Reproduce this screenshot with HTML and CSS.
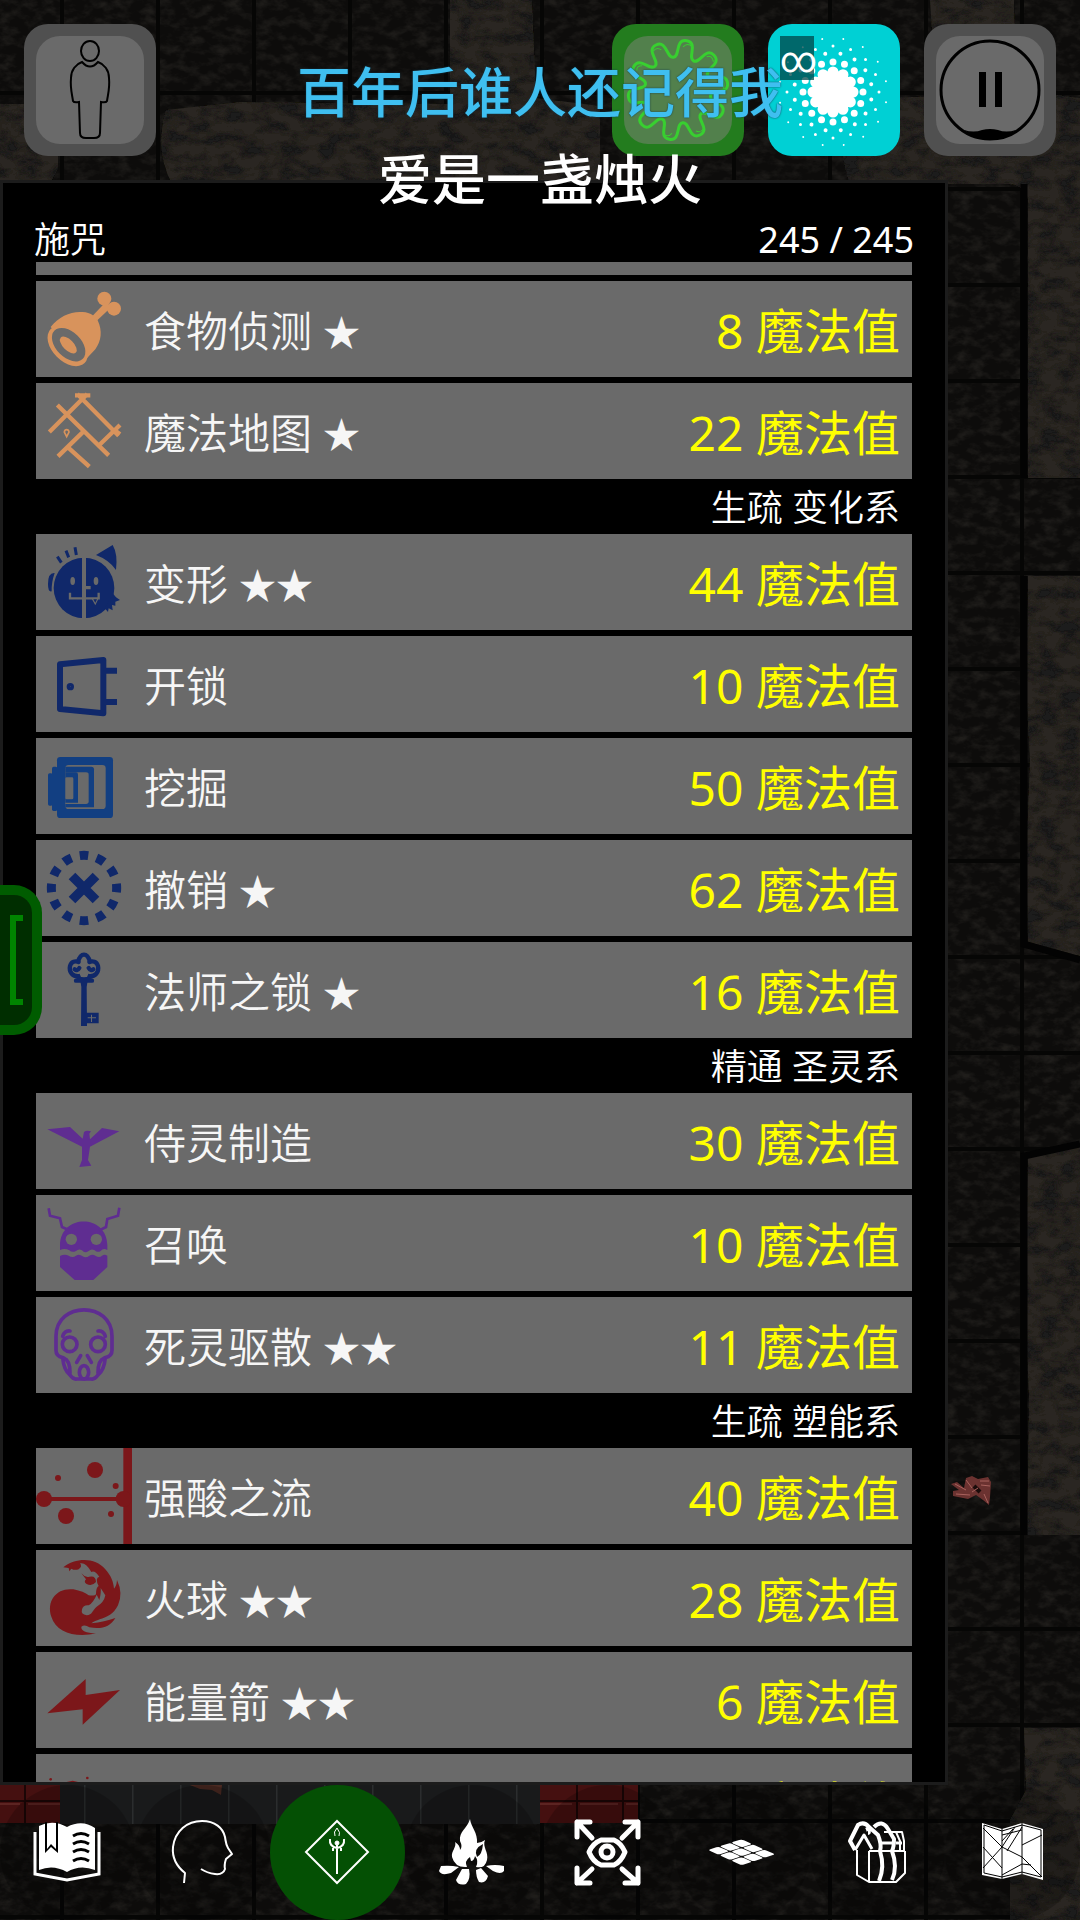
FILE: index.html
```html
<!DOCTYPE html>
<html lang="zh-CN">
<head>
<meta charset="utf-8">
<meta name="viewport" content="width=device-width, initial-scale=1">
<title>施咒</title>
<link rel="stylesheet" href="styles.css">
</head>
<body>
<div class="game">
  <svg class="dungeon" viewBox="0 0 1080 1920" preserveAspectRatio="xMaxYMax slice" aria-hidden="true">
    <defs>
      <filter id="rough" x="0" y="0" width="100%" height="100%">
        <feTurbulence type="fractalNoise" baseFrequency="0.07 0.11" numOctaves="4" seed="7"/>
        <feColorMatrix values="0 0 0 0 0.2  0 0 0 0 0.18  0 0 0 0 0.15  2.4 0 0 0 -1"/>
      </filter>
      <filter id="stone" x="0" y="0" width="100%" height="100%">
        <feTurbulence type="fractalNoise" baseFrequency="0.05 0.09" numOctaves="4" seed="3"/>
        <feColorMatrix values="0 0 0 0 0.01  0 0 0 0 0.01  0 0 0 0 0.01  3 0 0 0 -1.2" result="grain"/>
        <feComposite in="grain" in2="SourceAlpha" operator="in" result="cut"/>
        <feMerge><feMergeNode in="SourceGraphic"/><feMergeNode in="cut"/></feMerge>
      </filter>
      <pattern id="joints" x="60" y="0" width="96" height="96" patternUnits="userSpaceOnUse">
        <path d="M2 0V96M0 93H96" fill="none" stroke="#060605" stroke-width="4"/>
      </pattern>
      <pattern id="slab" x="36" y="1782" width="48" height="42" patternUnits="userSpaceOnUse">
        <rect width="48" height="42" fill="#191a1b"/>
        <path d="M0 0V42" stroke="#2b2d2e" stroke-width="3"/>
      </pattern>
      <pattern id="brick" x="24" y="1800" width="46" height="42" patternUnits="userSpaceOnUse">
        <rect width="46" height="42" fill="#451010"/>
        <path d="M0 0H46M0 0V42" stroke="#1b0606" stroke-width="4"/>
        <path d="M4 4H42" stroke="#5c2422" stroke-width="2"/>
      </pattern>
    </defs>
    <rect width="1080" height="1920" fill="#0d0c0b"/>
    <rect width="1080" height="1920" filter="url(#rough)" opacity=".16"/>
    <rect width="1080" height="1920" fill="url(#joints)"/>
    <g fill="#2a2721" filter="url(#stone)">
      <path d="M450 0H532L536 98 600 106V184H172Q154 150 166 110L240 102 450 104Z"/>
      <path d="M0 104H50L58 120V168L50 184H0Z"/>
      <path d="M930 0H1014L1016 90 1080 98V478H1028V200Q1024 184 1008 184H850Q838 150 840 100L936 96Z"/>
      <path d="M1028 576H1080V956L1028 942 1026 860 1030 760 1026 690Z"/>
      <path d="M1028 1158 1080 1146V1535H1027L1029 1400 1025 1300Z"/>
      <path d="M1024 1728H1080V1920H1010V1820L1026 1790Z"/>
    </g>
    <path d="M1024 576V944L1080 960M1024 1535V1156L1080 1144M1024 184V478" fill="none" stroke="#030303" stroke-width="7"/>
    <rect x="60" y="1782" width="480" height="42" fill="url(#slab)"/>
    <path d="M0 1782H60V1823H0ZM540 1782H638V1823H540Z" fill="url(#brick)"/>
    <path d="M190 1785 222 1785 221 1795 212 1790 200 1789Z" fill="#4b2a22"/>
    <path d="M951 1484 957 1482 964 1488 966 1478 972 1476 978 1479 988 1477 991 1482 990 1497 989 1505 983 1500 976 1495 968 1499 953 1496 953 1491 959 1490Z" fill="#6b3230"/>
    <path d="M974 1486 980 1492" stroke="#1a0b0a" stroke-width="4"/>
    <path d="M955 1484 966 1490M966 1480 972 1488M956 1494 970 1495M980 1481 989 1481M981 1485 990 1486M972 1492 978 1488M984 1494 988 1503" fill="none" stroke="#a9625d" stroke-width="1"/>
  </svg>

  <header class="toolbar">
    <button class="tool" aria-label="角色">
      <svg viewBox="0 0 132 132" fill="none" stroke="#000" stroke-width="2">
        <ellipse cx="66" cy="27" rx="9" ry="10"/>
        <path d="M58 38C52 40 47 46 47 54C46 64 48 70 49 77Q50 79 55 78L56 109Q56 114 62 114H70Q76 114 76 109L77 78Q82 79 83 77C84 70 86 64 85 54C85 46 80 40 74 38Q66 47 58 38Z"/>
      </svg>
    </button>
    <span class="toolbar-space"></span>
    <button class="tool tool-slime" aria-label="黏液">
      <svg viewBox="0 0 132 132" fill="none" stroke="#38cf30" stroke-width="3" stroke-linejoin="round">
        <g transform="translate(66 66) rotate(-8)">
          <path d="M50 0C50 12 33.6 3.5 31.4 10.2S47.5 19.7 40.5 29.4S25.1 22.6 19.4 26.7S26.9 43.9 15.5 47.6S7 33 0 33S-4.1 51.3 -15.5 47.6S-13.7 30.8 -19.4 26.7S-33.5 39.1 -40.5 29.4S-29.2 16.9 -31.4 10.2S-50 12 -50 0S-33.6 -3.5 -31.4 -10.2S-47.5 -19.7 -40.5 -29.4S-25.1 -22.6 -19.4 -26.7S-26.9 -43.9 -15.5 -47.6S-7 -33 0 -33S4.1 -51.3 15.5 -47.6S13.7 -30.8 19.4 -26.7S33.5 -39.1 40.5 -29.4S29.2 -16.9 31.4 -10.2S50 -12 50 0Z"/>
          <path stroke-width="1" d="M-19 -42Q-15 -46 -11 -42M11 -42Q16 -46 20 -41M33 -29Q39 -30 39 -23M-38 -25Q-38 -30 -32 -29M-46 4Q-48 -1 -44 -4M12 43Q16 46 20 42M-20 42Q-16 46 -12 42M45 5Q48 0 45 -5"/>
        </g>
      </svg>
    </button>
    <button class="tool tool-light" aria-label="光亮 ∞">
      <svg viewBox="0 0 132 132" fill="none" stroke="#fff" stroke-linecap="round">
        <circle cx="65" cy="68" r="21" fill="#fff" stroke="none"/>
        <circle cx="65" cy="68" r="20" stroke-width="11" pathLength="12" stroke-dasharray="0 1"/>
        <circle cx="65" cy="68" r="30" stroke-width="7" pathLength="16" stroke-dasharray="0 1"/>
        <circle cx="65" cy="68" r="39" stroke-width="4" pathLength="16" stroke-dasharray="0 1" transform="rotate(11 65 68)"/>
        <circle cx="65" cy="68" r="46" stroke-width="3" pathLength="16" stroke-dasharray="0 1"/>
        <circle cx="65" cy="68" r="54" stroke-width="2" pathLength="16" stroke-dasharray="0 1" transform="rotate(11 65 68)"/>
      </svg>
      <span class="tool-count">∞</span>
    </button>
    <button class="tool" aria-label="暂停">
      <svg viewBox="0 0 132 132">
        <circle cx="66" cy="66" r="49" fill="none" stroke="#000" stroke-width="3"/>
        <path d="M55 48H62V83H55ZM71 48H78V83H71Z"/>
        <path d="M40 106Q50 109 58 106Q66 104 74 106Q82 109 92 106Q80 116 66 116Q52 116 40 106Z"/>
      </svg>
    </button>
  </header>

  <main class="panel">
    <div class="panel-head">
      <h1>施咒</h1>
      <output class="mana">245 / 245</output>
    </div>
    <div class="spells">
      <div class="spell-tail"></div>
      <button class="spell">
        <svg class="c-divine" viewBox="0 0 288 288">
          <path d="M44 138C70 105 105 90 140 93C165 95 176 105 185 118C200 150 196 180 178 205L140 245Z"/>
          <ellipse cx="95" cy="195" rx="72" ry="46" transform="rotate(45 95 195)"/>
          <ellipse class="cut" cx="98" cy="191" rx="60" ry="38" transform="rotate(45 98 191)"/>
          <ellipse cx="97" cy="192" rx="32" ry="16" transform="rotate(45 97 192)"/>
          <circle cx="205" cy="53" r="21"/><circle cx="234" cy="83" r="21"/>
          <path d="M170 104 210 62 226 78 184 118Z"/>
        </svg>
        <span class="name">食物侦测 <i>★</i></span><span class="cost">8 魔法值</span>
      </button>
      <button class="spell">
        <svg class="c-divine line" viewBox="0 0 288 288">
          <path d="M64 66 218 217M40 147 154 33M124 33 248 158M252 126 190 186M142 146 66 220M96 193 160 251M117 37H163M252 154 236 142"/>
          <path class="thin" d="M92 161 85 147Q86 140 92 140Q98 140 99 147Z"/>
        </svg>
        <span class="name">魔法地图 <i>★</i></span><span class="cost">22 魔法值</span>
      </button>

      <h2>生疏 变化系</h2>
      <button class="spell">
        <svg class="c-alter" viewBox="0 0 288 288">
          <circle cx="144" cy="162" r="91"/>
          <path d="M56 117Q46 145 47 172Q36 175 36 150Q36 115 56 117ZM180 63 230 33Q246 60 240 108Q220 78 180 63ZM232 180 240 190 252 198 238 203 238 215 228 213 230 229 218 223 216 234 206 222Z"/>
          <path d="M64 68 76 86M90 50 98 70M117 40 121 63" stroke="#10286a" stroke-width="9"/>
          <path class="cut" d="M138 66H150V256H138ZM150 156H164V166H150ZM166 193 178 214 188 193Z"/>
          <ellipse class="cut" cx="110" cy="141" rx="7" ry="12"/><ellipse class="cut" cx="180" cy="141" rx="7" ry="12"/>
          <path d="M102 176V193H188V176" fill="none" stroke="#6a6a6a" stroke-width="7"/>
          <path d="M172 196 178 206 183 196Z"/>
        </svg>
        <span class="name">变形 <i>★★</i></span><span class="cost">44 魔法值</span>
      </button>
      <button class="spell">
        <svg class="c-alter line" viewBox="0 0 288 288" stroke-width="18" stroke-linejoin="round">
          <path d="M72 85 202 72V232L72 219ZM208 104H243M208 198H243"/>
          <circle cx="103" cy="152" r="5" stroke-width="12"/>
        </svg>
        <span class="name">开锁</span><span class="cost">10 魔法值</span>
      </button>
      <button class="spell">
        <svg class="c-dig" viewBox="0 0 288 288">
          <rect x="36" y="106" width="14" height="97" rx="5"/><rect x="48" y="86" width="16" height="133" rx="5"/>
          <rect x="63" y="57" width="168" height="183" rx="10"/>
          <rect class="cut" x="88" y="81" width="121" height="132" rx="10"/>
          <path d="M88 86H166Q174 86 174 94V208H88Z"/>
          <path class="cut" d="M88 103H150Q158 103 158 110V190Q158 198 150 198H88Z"/>
          <path d="M88 103H120Q126 103 126 110V194H88Z"/>
          <rect class="cut" x="88" y="118" width="24" height="66" rx="4"/>
        </svg>
        <span class="name">挖掘</span><span class="cost">50 魔法值</span>
      </button>
      <button class="spell">
        <svg class="c-alter line" viewBox="0 0 288 288">
          <path stroke-width="28" d="M108 108 180 180M180 108 108 180"/>
          <circle cx="144" cy="144" r="98" stroke-width="27" pathLength="360" stroke-dasharray="15 15" stroke-dashoffset="7.5"/>
        </svg>
        <span class="name">撤销 <i>★</i></span><span class="cost">62 魔法值</span>
      </button>
      <button class="spell">
        <svg class="c-alter" viewBox="0 0 288 288">
          <path d="M132 110H156L152 135 153 252H135L136 135ZM150 212H188V244H150Z"/>
          <path fill="none" stroke="#10286a" stroke-width="13" stroke-linecap="round" d="M144 112C128 112 124 108 132 102C110 106 98 90 102 72C106 58 118 56 128 60M144 112C160 112 164 108 156 102C178 106 190 90 186 72C182 58 170 56 160 60M126 60Q132 38 144 38Q156 38 162 60M130 78Q124 88 116 82M158 78Q164 88 172 82M120 116H168"/>
          <path class="cut" d="M155 226H180V229H155ZM165 218H168V240H165Z"/>
        </svg>
        <span class="name">法师之锁 <i>★</i></span><span class="cost">16 魔法值</span>
      </button>

      <h2>精通 圣灵系</h2>
      <button class="spell">
        <svg class="c-spirit" viewBox="0 0 288 288">
          <path d="M34 109 102 102 140 137 144 117Q152 110 165 115L160 122 162 139 198 105 250 115 162 161 156 201 166 218 130 222 138 201 138 161Z"/>
        </svg>
        <span class="name">侍灵制造</span><span class="cost">30 魔法值</span>
      </button>
      <button class="spell">
        <svg class="c-spirit" viewBox="0 0 288 288">
          <path d="M72 165V150C74 56 212 56 214 150V165Q202 158 194 168Q184 174 176 166Q166 160 158 168Q146 176 138 166Q128 160 120 168Q108 174 100 166Q86 158 72 165ZM72 183Q86 176 98 182Q110 190 120 182Q130 176 140 184Q150 190 160 182Q170 176 178 182Q190 190 198 182Q206 176 214 182V216L172 255H116L72 216Z"/>
          <path fill="none" stroke="#5f2d91" stroke-width="8" d="M38 40 42 62 72 70 78 96 100 106M250 38 246 62 214 72 210 96 190 106"/>
          <circle class="cut" cx="106" cy="133" r="17"/><circle class="cut" cx="181" cy="133" r="17"/>
        </svg>
        <span class="name">召唤</span><span class="cost">10 魔法值</span>
      </button>
      <button class="spell">
        <svg class="c-spirit line" viewBox="0 0 288 288" stroke-width="11" stroke-linecap="round">
          <path d="M60 118C60 12 228 12 228 118V160Q228 178 208 182C206 205 202 222 186 234Q176 248 166 246H122Q112 248 102 234C86 222 82 205 80 182Q60 178 60 160Z"/>
          <circle cx="101" cy="142" r="22"/><circle cx="186" cy="142" r="22"/>
          <path d="M80 118Q86 100 102 102M208 118Q202 100 186 102M134 176 122 196M154 176 166 196M84 184Q102 190 102 228M204 184Q186 190 186 228"/>
          <ellipse cx="144" cy="226" rx="14" ry="20"/>
        </svg>
        <span class="name">死灵驱散 <i>★★</i></span><span class="cost">11 魔法值</span>
      </button>

      <h2>生疏 塑能系</h2>
      <button class="spell">
        <svg class="c-evoke" viewBox="0 0 288 288">
          <path d="M262 0H288V288H262ZM24 147H262V159H24Z"/>
          <circle cx="24" cy="153" r="24"/><circle cx="263" cy="153" r="24"/><circle cx="177" cy="66" r="24"/><circle cx="90" cy="204" r="24"/>
          <circle cx="66" cy="90" r="9"/><circle cx="239" cy="114" r="9"/><circle cx="225" cy="198" r="9"/>
        </svg>
        <span class="name">强酸之流</span><span class="cost">40 魔法值</span>
      </button>
      <button class="spell">
        <svg class="c-evoke" viewBox="0 0 288 288">
          <path d="M82 52C120 22 178 22 208 58C226 78 232 96 234 116Q242 108 243 90Q262 130 246 166Q236 186 222 194C200 208 180 208 166 220Q206 216 238 204C222 232 196 238 160 232Q146 222 136 230Q134 248 180 250C120 264 60 248 46 200C30 150 64 112 112 118Q144 124 158 136Q178 138 180 132Q180 112 188 108Q176 84 190 80Q176 60 166 66Q150 36 132 40Q140 50 128 58Q116 62 106 56L100 64 98 54Z"/>
          <path d="M136 70Q148 84 160 80Q180 76 180 96Q168 110 152 102Q142 96 150 88Z"/>
          <path class="cut" d="M182 134 190 150Q196 128 194 114L208 136Q204 158 182 170C168 182 170 194 152 196Q134 194 138 178Q142 164 158 166Q172 158 182 134Z"/>
        </svg>
        <span class="name">火球 <i>★★</i></span><span class="cost">28 魔法值</span>
      </button>
      <button class="spell">
        <svg class="c-evoke" viewBox="0 0 288 288"><path d="M34 184 149 81V129L252 114 140 218V172Z"/></svg>
        <span class="name">能量箭 <i>★★</i></span><span class="cost">6 魔法值</span>
      </button>
      <button class="spell">
        <svg class="c-evoke" viewBox="0 0 288 288"><circle cx="44" cy="76" r="4"/><circle cx="154" cy="72" r="4"/><path d="M92 84 110 80 126 84 130 100H90Z"/></svg>
        <span class="cost">魔法值</span>
      </button>
    </div>
  </main>

  <nav class="dock" aria-label="菜单">
    <button class="dock-item" aria-label="日志">
      <svg viewBox="0 0 135 135">
        <path d="M35 47V89L67 95 99 89V47" fill="none" stroke="#fff" stroke-width="3"/>
        <path fill="#fff" d="M39 41Q53 34 67 42Q82 34 95 43V85Q80 79 67 87Q53 79 39 85Z"/>
        <path d="M45 37H47V64L51 59 56 64V37H58V68L51 62 45 68Z"/>
        <path d="M73 51Q81 46 89 51M73 59Q81 54 89 59M73 67Q81 62 89 67M73 76Q81 71 89 76" fill="none" stroke="#000" stroke-width="3"/>
      </svg>
    </button>
    <button class="dock-item" aria-label="心智">
      <svg viewBox="0 0 135 135" fill="none" stroke="#fff" stroke-width="2" stroke-linejoin="round">
        <path d="M49 98 50 88C40 80 37 72 38 62C40 46 52 36 67 36C80 36 88 43 90 52C91 58 91 60 93 63L97 69 91 74Q89 80 90 84Q88 90 80 89Q72 88 66 84"/>
      </svg>
    </button>
    <button class="dock-item is-active" aria-label="施咒" aria-current="page">
      <svg viewBox="0 0 135 135" fill="none" stroke="#fff">
        <path stroke-width="2" d="M67 36 98 67 67 98 36 67Z"/>
        <path stroke-width="2" d="M67 60V89M60 54Q59 62 67 63Q75 62 74 54M63 63V66M71 63V66"/>
        <path d="M65 51Q63 47 67 43Q71 48 69 51"/>
        <circle cx="67" cy="58" r="2" fill="#fff"/>
      </svg>
    </button>
    <button class="dock-item" aria-label="休息">
      <svg viewBox="0 0 135 135" fill="#fff">
        <path d="M65 34C66 42 73 48 72 58Q76 58 80 55C77 62 84 67 82 75Q80 84 71 82Q74 76 70 71Q69 76 66 76L65 72Q59 76 62 82Q50 83 47 72C46 66 52 62 50 57Q55 60 55 65Q58 62 55 56C54 46 62 44 65 34Z"/>
        <path class="dark" d="M78 59Q68 64 72 72Q77 70 78 59Z"/>
        <path d="M36 81Q45 80 54 82L46 88Q36 91 34 86ZM99 81Q90 79 81 81L88 86Q96 90 99 86ZM57 84 64 84Q66 94 61 99Q53 101 51 95ZM71 85 76 83 83 91Q81 99 74 97Q71 92 71 85Z"/>
      </svg>
    </button>
    <button class="dock-item" aria-label="观察">
      <svg viewBox="0 0 135 135" fill="none" stroke="#fff" stroke-width="5" stroke-linejoin="round" stroke-linecap="round">
        <path d="M37 52V37H50M37 37 52 53M85 37H98V52M98 37 82 53M37 83V98H50M37 98 52 84M85 98H98V83M98 98 82 84"/>
        <path d="M49 67Q53 58 61 55H74Q81 58 85 67Q81 77 74 80H61Q53 77 49 67Z"/>
        <circle cx="67" cy="67" r="6"/>
      </svg>
    </button>
    <button class="dock-item" aria-label="地面">
      <svg viewBox="0 0 135 135" fill="#fff">
        <g transform="matrix(11.5 -3.7 11.5 5.2 33 65)">
          <rect x="0" y="0" width=".92" height=".92" rx=".2"/><rect x="1" y="0" width=".92" height=".92" rx=".2"/><rect x="2" y="0" width=".92" height=".92" rx=".2"/>
          <rect x="0" y="1" width=".92" height=".92" rx=".2"/><rect x="1" y="1" width=".92" height=".92" rx=".2"/><rect x="2" y="1" width=".92" height=".92" rx=".2"/>
          <rect x="0" y="2" width=".92" height=".92" rx=".2"/><rect x="1" y="2" width=".92" height=".92" rx=".2"/><rect x="2" y="2" width=".92" height=".92" rx=".2"/>
        </g>
      </svg>
    </button>
    <button class="dock-item" aria-label="背包">
      <svg viewBox="0 0 135 135" fill="none" stroke="#fff" stroke-width="2" stroke-linejoin="round">
        <path d="M47 65V90L59 97H86L95 88V66M59 66V97M59 66H94M94 66V56L92 47H74M86 47 90 56V66"/>
        <path stroke-width="4" d="M45 65 40 56 48 40Q54 36 59 42L68 50Q72 60 70 66Q75 82 69 96M57 42Q60 48 58 48M64 42Q72 34 78 44L84 54Q84 62 82 66Q88 82 82 95"/>
        <path stroke-width="3" d="M45 65 54 50 62 64M72 58H82M86 58H92"/>
      </svg>
    </button>
    <button class="dock-item" aria-label="地图">
      <svg viewBox="0 0 135 135">
        <path d="M37 38 57 44 77 38 98 44V95L77 89 57 94 37 90Z" fill="#fff"/>
        <path d="M39 40 57 46 77 40 96 45V92L77 87 57 92 39 88Z" fill="none" stroke="#000" stroke-width="1"/>
        <path d="M57 44V94M77 38V89M38 43 57 62 77 72 97 92M38 83 57 62 70 42M38 62 57 83M57 50 77 45M62 66 77 42M77 60 97 50M57 90 77 79 86 80M68 44 57 56" fill="none" stroke="#000" stroke-width="1"/>
      </svg>
    </button>
  </nav>

  <button class="side-tab" aria-label="展开">
    <svg viewBox="0 0 13 90"><path d="M13 3H3V87H13" fill="none" stroke="#008400" stroke-width="6"/></svg>
  </button>

  <div class="lyrics">
    <p class="lyric lyric-now">百年后谁人还记得我</p>
    <p class="lyric">爱是一盏烛火</p>
  </div>
</div>
</body>
</html>
```
FILE: styles.css
```css
* { box-sizing: border-box; }

body {
  margin: 0;
  background: #0b0a09;
  color: #fff;
  font-family: "Noto Sans", "Noto Sans CJK SC", sans-serif;
}

button {
  margin: 0;
  padding: 0;
  border: 0;
  background: none;
  color: inherit;
  font: inherit;
}

svg { display: block; }

.game {
  position: relative;
  display: flex;
  flex-direction: column;
  height: 100vh;
  overflow: hidden;
}

.dungeon {
  position: absolute;
  inset: 0;
  width: 100%;
  height: 100%;
}

/* top buttons */
.toolbar {
  position: relative;
  display: flex;
  gap: 24px;
  padding: 24px;
}

.toolbar-space { flex: 1; }

.tool {
  position: relative;
  width: 132px;
  height: 132px;
  border-radius: 24px;
  background: #505050;
}

.tool::before {
  content: "";
  position: absolute;
  inset: 12px;
  border-radius: 24px;
  background: #6a6a6a;
}

.tool svg { position: relative; }
.tool-slime { background: #237c1e; }
.tool-slime::before { background: #52804c; }
.tool-light, .tool-light::before { background: #00d0d4; }

.tool-count {
  position: absolute;
  top: 12px;
  left: 12px;
  width: 34px;
  height: 44px;
  background: rgba(0, 70, 72, .75);
  font-family: Roboto, sans-serif;
  font-size: 36px;
  line-height: 48px;
  text-align: center;
}

/* spell panel */
.panel {
  position: relative;
  display: flex;
  flex: 1;
  flex-direction: column;
  min-height: 0;
  margin-right: 132px;
  border: 3px solid #1c1c1c;
  background: #000;
}

.panel-head {
  display: flex;
  align-items: flex-end;
  justify-content: space-between;
  padding: 35px 31px 0;
  font-size: 36px;
  line-height: 44px;
}

h1, h2 {
  margin: 0;
  font-size: 36px;
  font-weight: 350;
}

.spells {
  display: flex;
  flex: 1;
  flex-direction: column;
  gap: 6px;
  min-height: 0;
  padding: 0 33px;
  overflow: hidden;
}

.spell-tail {
  flex: none;
  height: 13px;
  background: #6a6a6a;
}

.spells h2 {
  flex: none;
  padding: 3px 12px 0 0;
  line-height: 40px;
  text-align: right;
}

.spell {
  display: flex;
  flex: none;
  align-items: center;
  gap: 12px;
  min-height: 96px;
  padding-right: 12px;
  background: #6a6a6a;
  text-align: left;
}

.spell svg { width: 96px; height: 96px; }

.name {
  padding-top: 4px;
  color: #f6f6f6;
  font-size: 42px;
  font-weight: 350;
  line-height: 60px;
}

.name i {
  font-family: "DejaVu Sans", sans-serif;
  font-size: 37px;
  font-style: normal;
  line-height: 1;
}

.cost {
  margin-left: auto;
  padding-top: 4px;
  color: #ff0;
  font-size: 48px;
  font-weight: 400;
  line-height: 60px;
}

.c-divine { fill: #d8935c; stroke: #d8935c; stroke-width: 0; }
.c-alter { fill: #10286a; }
.c-dig { fill: #123f82; }
.c-spirit { fill: #5f2d91; }
.c-evoke { fill: #7c171a; }
.cut { fill: #6a6a6a; }
.line { fill: none; }
.thin { stroke-width: 5px; }
.c-divine.line { stroke-width: 13px; }
.c-alter.line { stroke: #10286a; }
.c-spirit.line { stroke: #5f2d91; }

/* bottom menu */
.dock {
  position: relative;
  display: grid;
  grid-template-columns: repeat(8, 1fr);
}

.dock-item {
  aspect-ratio: 1;
  border-radius: 50%;
  background: rgba(0, 0, 0, .2);
}

.dock-item.is-active { background: #045004; }
.dark { fill: #0b0a09; }

/* drawer handle */
.side-tab {
  position: absolute;
  top: 885px;
  left: 0;
  display: flex;
  align-items: center;
  width: 42px;
  height: 150px;
  padding-left: 10px;
  border: 10px solid #005c00;
  border-left: 0;
  border-radius: 0 28px 28px 0;
  background: #002e00;
}

.side-tab svg { width: 13px; height: 90px; }

/* floating song text */
.lyrics {
  position: absolute;
  top: 46px;
  left: 0;
  right: 0;
  text-align: center;
  pointer-events: none;
}

.lyric {
  margin: 0;
  font-family: "Noto Sans CJK SC", sans-serif;
  font-size: 54px;
  font-weight: 500;
  line-height: 87px;
}

.lyric-now {
  color: #3fbff0;
  text-shadow: 0 0 2px #123c50;
}
```
